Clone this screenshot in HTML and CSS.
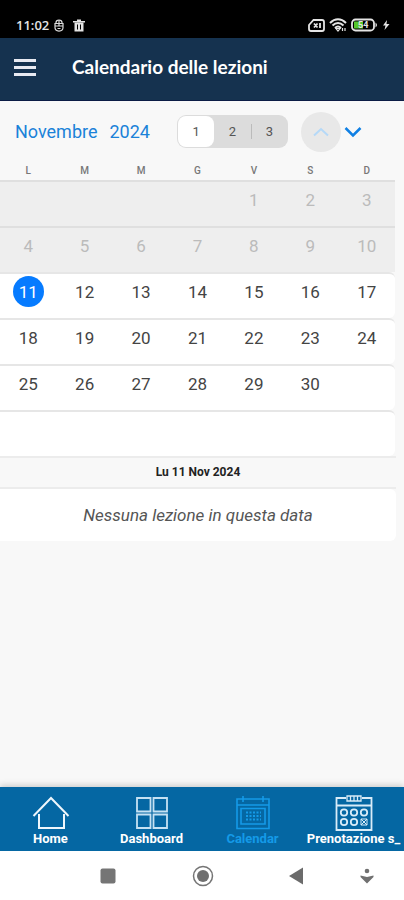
FILE: index.html
```html
<!DOCTYPE html>
<html lang="it">
<head>
<meta charset="utf-8">
<meta name="viewport" content="width=device-width, initial-scale=1">
<title>Calendario delle lezioni</title>
<link rel="stylesheet" href="styles.css">
</head>
<body>
<div class="status">
  <span class="clock">11:02</span>
  <svg class="status-mouse" width="10" height="13" viewBox="0 0 10 13" fill="none" stroke="#ddd" stroke-width="1.2"><path d="M2 4.5V3.600C2 .3 8 .3 8 3.600V4.500M1 4.500H9V8.500C9 13.200 1 13.200 1 8.500ZM1.500 7H8.500M5 2V7M3.500 9.500H6.500"/></svg>
  <svg width="12" height="13" viewBox="0 0 12 13" fill="#e4e4e4"><path d="M0 2H4V.5H8V2H12V3.500H0Z"/><path fill-rule="evenodd" d="M1.500 3.500H10.500V12.500H1.500ZM4 5.500V10.500H5V5.500ZM7 5.500V10.500H8V5.500Z"/></svg>
  <div class="status-right">
    <svg width="17" height="13" viewBox="0 0 17 13" fill="none" stroke="#e4e4e4" stroke-width="1.800"><path d="M5.500 1H14Q16 1 16 3V10Q16 12 14 12H3Q1 12 1 10V6Z"/><path d="M6 4.500L9.500 8.500M9.500 4.500L6 8.500M12 4V9"/></svg>
    <svg width="18" height="14" viewBox="0 0 18 14" fill="none" stroke="#e4e4e4" stroke-width="2"><path d="M1 5C6 0 12 0 17 5M3.500 7.500C7 4 11 4 14.500 7.500M6 10C8 8 10 8 12 10"/><path d="M7 10.500H11L9 13ZM13.500 10V13M16 10V13" stroke-width="1.200"/></svg>
    <svg width="27" height="14" viewBox="0 0 27 14"><rect x="1" y="1.500" width="22" height="11" rx="3.500" fill="none" stroke="#e4e4e4" stroke-width="1.800"/><path d="M3 3.500H12V10.500H3Z" fill="#55c82c"/><path d="M24.500 4.500Q27.500 7 24.500 9.500Z" fill="#e4e4e4"/><text x="7" y="10" class="battery-text">54</text></svg>
    <svg width="8" height="12" viewBox="0 0 8 12" fill="#e4e4e4"><path d="M5 1L1 6.500H3.500L2.500 11L7.500 5H4.500Z"/></svg>
  </div>
</div>
<header class="header">
  <button class="menu" type="button" aria-label="Menu"><span></span><span></span><span></span></button>
  <h1>Calendario delle lezioni</h1>
</header>
<main class="content">
  <div class="toolbar">
    <a class="month" href="#"><span>Novembre</span> <span>2024</span></a>
    <div class="segment" role="group" aria-label="Settimane">
      <button class="selected" type="button">1</button>
      <button type="button">2</button>
      <button class="divided" type="button">3</button>
    </div>
    <button class="arrow arrow-up" type="button" aria-label="Precedente" disabled><svg width="18" height="10" viewBox="0 0 18 10" fill="none" stroke="#b5d9f8" stroke-width="2"><path d="M2 8.500L9 2L16 8.500"/></svg></button>
    <button class="arrow arrow-down" type="button" aria-label="Successivo"><svg width="18" height="12" viewBox="0 0 18 12" fill="none" stroke="#1080e4" stroke-width="2.500"><path d="M1.500 2L9 9.500L16.500 2"/></svg></button>
  </div>
  <table class="calendar">
    <thead><tr><th>L</th><th>M</th><th>M</th><th>G</th><th>V</th><th>S</th><th>D</th></tr></thead>
    <tbody>
      <tr class="past"><td></td><td></td><td></td><td></td><td>1</td><td>2</td><td>3</td></tr>
      <tr class="past"><td>4</td><td>5</td><td>6</td><td>7</td><td>8</td><td>9</td><td>10</td></tr>
      <tr><td><span class="today">11</span></td><td>12</td><td>13</td><td>14</td><td>15</td><td>16</td><td>17</td></tr>
      <tr><td>18</td><td>19</td><td>20</td><td>21</td><td>22</td><td>23</td><td>24</td></tr>
      <tr><td>25</td><td>26</td><td>27</td><td>28</td><td>29</td><td>30</td><td></td></tr>
      <tr><td></td><td></td><td></td><td></td><td></td><td></td><td></td></tr>
    </tbody>
  </table>
  <section class="agenda">
    <h2>Lu 11 Nov 2024</h2>
    <p>Nessuna lezione in questa data</p>
  </section>
</main>
<nav class="tabs">
  <a href="#"><svg width="38" height="34" viewBox="0 0 38 34" fill="none" stroke="#eef6fc" stroke-width="2"><path d="M1.500 20L19 2L36.500 20M7 18V32H32V18"/></svg><span>Home</span></a>
  <a href="#"><svg width="34" height="34" viewBox="0 0 34 34" fill="none" stroke="#c5e1f3" stroke-width="1.800"><path d="M2 2H15.500V15.500H2ZM18.500 2H32V15.500H18.500ZM2 18.500H15.500V32H2ZM18.500 18.500H32V32H18.500Z"/></svg><span>Dashboard</span></a>
  <a class="active" href="#"><svg width="34" height="34" viewBox="0 0 34 34" fill="none" stroke="#149ae8" stroke-width="1.600"><path d="M1 3H33V32.500H1ZM7 0V6M27 0V6M1 9H33"/><path d="M5 12.500H29V28H5Z"/><path d="M10 16.500H25M10 20H25M10 23.500H25" stroke-width="2.200" stroke-dasharray="2 1.500"/></svg><span>Calendar</span></a>
  <a href="#"><svg width="38" height="36" viewBox="0 0 38 36" fill="none" stroke="#d9ecf8" stroke-width="1.800"><path d="M11 3H1.500V35H36.500V3H27M1.500 10.500H36.500"/><path d="M12 1H26V6H12ZM15.500 1V6M19 1V6M22.500 1V6" stroke-width="1.300"/><circle cx="9" cy="17.500" r="3.200"/><circle cx="19" cy="17.500" r="3.200"/><circle cx="29" cy="17.500" r="3.200"/><circle cx="9" cy="27" r="3.200"/><circle cx="19" cy="27" r="3.200"/><path d="M26 24L32 30M32 24L26 30M26 24H32V30H26Z" stroke-width="1"/></svg><span>Prenotazione s_</span></a>
</nav>
<div class="system">
  <button type="button" aria-label="Recenti"><svg width="16" height="16" viewBox="0 0 16 16"><rect x=".5" y=".5" width="15" height="15" rx="2" fill="#757575"/></svg></button>
  <button type="button" aria-label="Home di sistema"><svg width="22" height="22" viewBox="0 0 22 22"><circle cx="11" cy="11" r="9.500" fill="none" stroke="#757575" stroke-width="1.500"/><circle cx="11" cy="11" r="6" fill="#707070"/></svg></button>
  <button type="button" aria-label="Indietro"><svg width="16" height="18" viewBox="0 0 16 18"><path d="M15 .5V17.500L1 9Z" fill="#6b6b6b"/></svg></button>
  <button type="button" aria-label="Nascondi barra"><svg width="14" height="16" viewBox="0 0 14 16" fill="#707070"><circle cx="7" cy="3" r="2.300"/><path d="M.5 7.500L7 9L13.500 7.500V9L7 15.500L.5 9Z"/></svg></button>
</div>
</body>
</html>
```
FILE: styles.css
```css
* { box-sizing: border-box; }

body {
  margin: 0;
  min-height: 100vh;
  display: flex;
  flex-direction: column;
  background: #f8f8f8;
  font-family: Roboto, "Liberation Sans", sans-serif;
  color: #444;
}

button {
  border: 0;
  padding: 0;
  background: none;
  font: inherit;
  color: inherit;
}

a { text-decoration: none; color: inherit; }
svg { display: block; flex: none; }

.status {
  height: 38px;
  padding: 12px 14px 0 16px;
  display: flex;
  align-items: center;
  background: #000;
  color: #e4e4e4;
}

.clock {
  margin-right: 5px;
  font: 600 13px/20px "Open Sans", sans-serif;
}

.status-mouse { margin-right: 9px; }

.status-right {
  margin-left: auto;
  display: flex;
  align-items: center;
  gap: 4px;
}

.battery-text {
  font: 700 9px Roboto, sans-serif;
  fill: #e4e4e4;
}

.header {
  height: 63px;
  padding: 0 14px 4px;
  display: flex;
  align-items: center;
  gap: 36px;
  background: #15324f;
  border-bottom: 1px solid #0b1c45;
  color: #fff;
}

.menu {
  width: 22px;
  display: grid;
  gap: 4px;
}

.menu span {
  height: 3px;
  background: #e8eaf2;
}

.header h1 {
  margin: 0;
  font: 700 19px/24px Lato, sans-serif;
}

.content { flex: 1; }

.toolbar {
  height: 61px;
  padding-left: 15px;
  display: flex;
  align-items: center;
}

.month {
  flex: none;
  width: 162px;
  display: flex;
  gap: 12px;
  font-size: 18px;
  line-height: 24px;
  color: #1b82d8;
}

.segment {
  width: 111px;
  height: 33px;
  padding: 1px;
  display: grid;
  grid-template-columns: repeat(3, 1fr);
  align-items: center;
  background: #dcdcdc;
  border-radius: 9px;
  font-size: 13px;
  color: #555;
}

.segment .selected {
  height: 31px;
  background: #fff;
  border-radius: 8px;
}

.segment .divided { border-left: 1px solid #bbb; }

.arrow {
  height: 40px;
  display: grid;
  place-items: center;
}

.arrow-up {
  width: 40px;
  margin-left: 13px;
  background: #e8e8e8;
  border-radius: 50%;
}

.arrow-down {
  width: 24px;
}

.calendar {
  width: calc(100% - 9px);
  table-layout: fixed;
  border-collapse: separate;
  border-spacing: 0;
}

.calendar th {
  height: 18px;
  padding: 0;
  font-size: 10px;
  line-height: 16px;
  font-weight: 500;
  color: #777;
}

.calendar td {
  height: 46px;
  padding: 2px 0 0;
  border-top: 2px solid #e6e6e6;
  vertical-align: top;
  text-align: center;
  font-size: 17px;
  line-height: 32px;
  background: #fff;
}

.calendar td:last-child { border-radius: 0 6px 6px 0; }

.calendar .past td {
  background: #eee;
  border-color: #dfdfdf;
  border-radius: 0;
  color: #bbb;
}

.today {
  display: block;
  width: 31px;
  height: 31px;
  margin: 0 auto;
  border-radius: 50%;
  background: #067bff;
  color: #fff;
}

.agenda { margin-right: 8px; }

.agenda h2 {
  margin: 0;
  border: solid #ececec;
  border-width: 2px 0;
  font-size: 12px;
  line-height: 29px;
  font-weight: 700;
  text-align: center;
  color: #222;
}

.agenda p {
  margin: 0;
  padding: 14px 0;
  border-radius: 0 6px 6px 0;
  background: #fff;
  font-size: 17px;
  line-height: 24px;
  font-style: italic;
  text-align: center;
  color: #555;
}

.tabs {
  height: 64px;
  display: grid;
  grid-template-columns: repeat(4, 1fr);
  background: #0567a3;
  box-shadow: 0 -2px 6px #ccc;
  color: #fff;
}

.tabs a {
  display: grid;
  grid-template-rows: 36px 16px;
  justify-items: center;
  align-content: start;
  align-items: center;
  padding-top: 8px;
  font-size: 13px;
  line-height: 16px;
  font-weight: 700;
  white-space: nowrap;
}

.tabs .active { color: #149ae8; }

.system {
  height: 49px;
  padding: 0 12px 0 60px;
  display: grid;
  grid-template-columns: 96fr 94fr 92fr 50fr;
  background: #fff;
}

.system button {
  display: grid;
  place-items: center;
}
```
